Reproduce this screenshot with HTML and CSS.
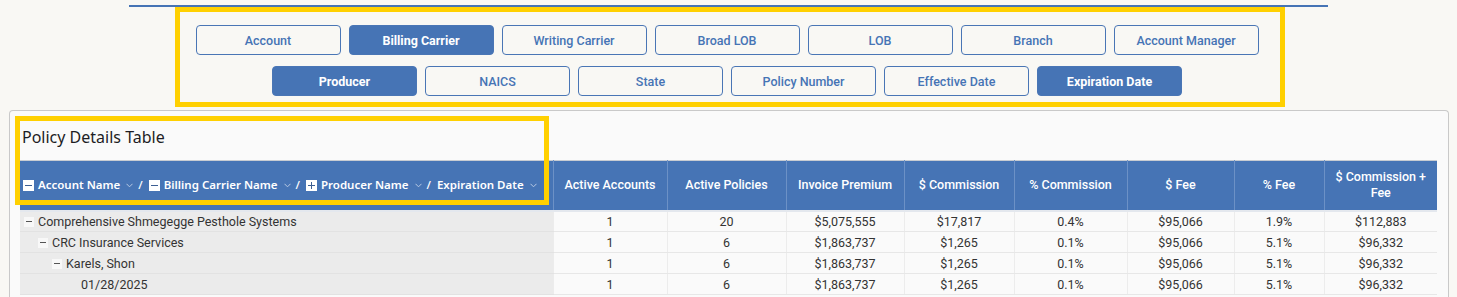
FILE: index.html
```html
<!DOCTYPE html>
<html lang="en">
<head>
    <meta charset="UTF-8">
    <meta name="viewport" content="width=device-width, initial-scale=1.0">
    <title>Policy Details</title>
    <link rel="stylesheet" href="styles.css">
</head>
<body>

    <div class="rule"></div>

    <!-- group-by chips -->
    <div class="filters">
        <button class="chip">Account</button>
        <button class="chip on">Billing Carrier</button>
        <button class="chip">Writing Carrier</button>
        <button class="chip">Broad LOB</button>
        <button class="chip">LOB</button>
        <button class="chip">Branch</button>
        <button class="chip">Account Manager</button>
        <button class="chip on">Producer</button>
        <button class="chip">NAICS</button>
        <button class="chip">State</button>
        <button class="chip">Policy Number</button>
        <button class="chip">Effective Date</button>
        <button class="chip on">Expiration Date</button>
    </div>

    <section class="panel">
        <h2 class="panel-title">Policy Details Table</h2>

        <table class="grid">
            <colgroup>
                <col style="width:533px">
                <col style="width:114px">
                <col style="width:119px">
                <col style="width:118px">
                <col style="width:110px">
                <col style="width:113px">
                <col style="width:107px">
                <col style="width:90px">
                <col style="width:113px">
            </colgroup>
            <thead>
                <tr>
                    <th class="pivot">
                        <div class="crumbs">
                            <span class="tog minus"></span><span class="lbl">Account Name</span>
                            <svg class="chev" width="7" height="5" viewBox="0 0 7 5"><polyline points="0.5,0.8 3.5,3.8 6.5,0.8" fill="none" stroke="currentColor" stroke-width="1"/></svg>
                            <span class="sl">/</span>
                            <span class="tog minus"></span><span class="lbl">Billing Carrier Name</span>
                            <svg class="chev" width="7" height="5" viewBox="0 0 7 5"><polyline points="0.5,0.8 3.5,3.8 6.5,0.8" fill="none" stroke="currentColor" stroke-width="1"/></svg>
                            <span class="sl">/</span>
                            <span class="tog plus"></span><span class="lbl">Producer Name</span>
                            <svg class="chev" width="7" height="5" viewBox="0 0 7 5"><polyline points="0.5,0.8 3.5,3.8 6.5,0.8" fill="none" stroke="currentColor" stroke-width="1"/></svg>
                            <span class="sl">/</span>
                            <span class="lbl last">Expiration Date</span>
                            <svg class="chev" width="7" height="5" viewBox="0 0 7 5"><polyline points="0.5,0.8 3.5,3.8 6.5,0.8" fill="none" stroke="currentColor" stroke-width="1"/></svg>
                        </div>
                    </th>
                    <th>Active Accounts</th>
                    <th>Active Policies</th>
                    <th>Invoice Premium</th>
                    <th>$ Commission</th>
                    <th>% Commission</th>
                    <th>$ Fee</th>
                    <th>% Fee</th>
                    <th>$ Commission +<br>Fee</th>
                </tr>
            </thead>
            <tbody>
                <tr>
                    <td class="tree lv0"><span class="node"></span>Comprehensive Shmegegge Pesthole Systems</td>
                    <td>1</td><td>20</td><td>$5,075,555</td><td>$17,817</td><td>0.4%</td><td>$95,066</td><td>1.9%</td><td>$112,883</td>
                </tr>
                <tr>
                    <td class="tree lv1"><span class="node"></span>CRC Insurance Services</td>
                    <td>1</td><td>6</td><td>$1,863,737</td><td>$1,265</td><td>0.1%</td><td>$95,066</td><td>5.1%</td><td>$96,332</td>
                </tr>
                <tr>
                    <td class="tree lv2"><span class="node"></span>Karels, Shon</td>
                    <td>1</td><td>6</td><td>$1,863,737</td><td>$1,265</td><td>0.1%</td><td>$95,066</td><td>5.1%</td><td>$96,332</td>
                </tr>
                <tr>
                    <td class="tree lv3">01/28/2025</td>
                    <td>1</td><td>6</td><td>$1,863,737</td><td>$1,265</td><td>0.1%</td><td>$95,066</td><td>5.1%</td><td>$96,332</td>
                </tr>
            </tbody>
        </table>

        <!-- highlight overlay -->
        <div class="mark"></div>
    </section>

</body>
</html>
```

FILE: styles.css
```css
*{box-sizing: border-box;}
body{
    margin:0;
    background:#f9f8f4;
    font-family: Roboto, "Liberation Sans", sans-serif;
    color:#333;
}

.rule{
    height:2px;
    margin:5px 129px 0 129px;
    background:#4674b5;
}

/* chips */
.filters{
    width:1110px;
    margin-left:175px;
    border:5px solid #ffd000;
    padding:13px 8px 6px 2px;
    display:flex;
    flex-wrap:wrap;
    justify-content:center;
    column-gap:8px;
    row-gap:11px;
}
.chip{
    width:145px;
    height:30px;
    border:1px solid #4a76b5;
    border-radius:4px;
    background:transparent;
    color:#4674b5;
    font-family: Roboto, sans-serif;
    font-size:12.5px;
    font-weight:500;
    padding:0;
}
.chip.on{
    background:#4674b5;
    color:#fff;
    font-weight:700;
}

/* panel */
.panel{
    position:relative;
    margin:3px 8px 0 9px;
    border:1px solid #c9c9c9;
    border-bottom:none;
    border-radius:4px 4px 0 0;
    background:#fafafa;
    padding:0 10px 0 10px;
    height:200px;
}
.panel-title{
    margin:0;
    padding:15px 0 12px 2px;
    font-family:"Noto Sans", sans-serif;
    font-size:16px;
    font-weight:400;
    line-height:22px;
    color:#1d1d24;
}

.grid{
    width:1417px;
    table-layout:fixed;
    border-collapse:collapse;
    border-top:1px solid #c8ccd2;
}
.grid th{
    height:50px;
    padding:0 6px;
    background:#4674b5;
    color:#fff;
    font-size:12.5px;
    font-weight:500;
    line-height:16px;
    text-align:center;
    border-left:1px solid #6c91c6;
    border-bottom:2px solid #e4e8ee;
}
.grid th:first-child{border-left:none;}
.grid th.pivot{padding:0 0 0 3px;text-align:left;}

.crumbs{
    display:flex;
    align-items:center;
    font-family:"Noto Sans", sans-serif;
    font-size:11.5px;
    font-weight:600;
    white-space:nowrap;
}
.crumbs .lbl{margin-left:4px;}
.crumbs .lbl.last{margin-left:0;}
.crumbs .chev{color:#b8c9e3;margin-left:6px;}
.crumbs .sl{margin:0 6px 0 5px;font-weight:500;}

.tog{
    width:11px;
    height:11px;
    background:#fff;
    position:relative;
    display:inline-block;
}
.tog::before{
    content:"";
    position:absolute;
    left:2px;
    top:5px;
    width:7px;
    height:1.5px;
    background:#3d5f93;
}
.tog.plus::after{
    content:"";
    position:absolute;
    left:5px;
    top:2px;
    width:1.5px;
    height:7px;
    background:#3d5f93;
}

.grid td{
    height:21px;
    padding:0;
    font-size:12.5px;
    color:#333;
    text-align:center;
    border-left:1px solid #ececec;
    border-bottom:1px solid #e7e7e7;
    white-space:nowrap;
}
.grid td.tree{
    background:#ebebeb;
    text-align:left;
    border-left:none;
    border-bottom-color:#e2e2e2;
}
.tree .node{
    display:inline-block;
    width:10px;
    height:10px;
    margin-right:4px;
    vertical-align:-1px;
    background:#f8f8f8;
    position:relative;
}
.tree .node::before{
    content:"";
    position:absolute;
    left:2px;
    top:4px;
    width:6px;
    height:1px;
    background:#555;
}
.tree.lv0{padding-left:4px;}
.tree.lv1{padding-left:18px;}
.tree.lv2{padding-left:32px;}
.tree.lv3{padding-left:61px;}

.mark{
    position:absolute;
    left:5px;
    top:5px;
    width:534px;
    height:89px;
    border:5px solid #ffd000;
    pointer-events:none;
}
```
